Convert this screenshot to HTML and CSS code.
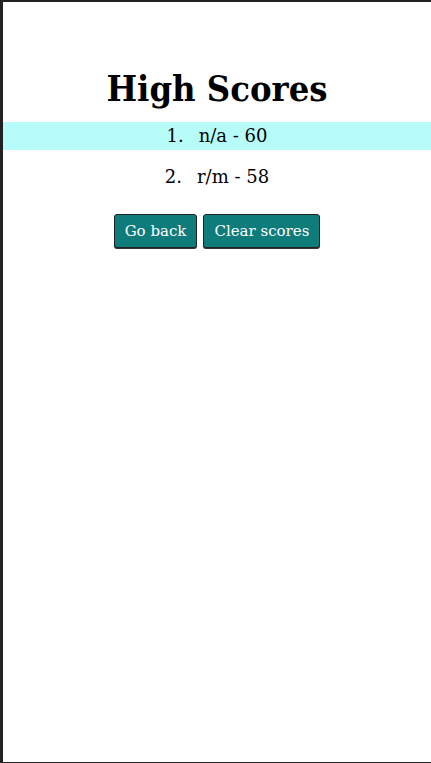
FILE: index.html
```html
<!DOCTYPE html>
<html>
<head>
<meta charset="utf-8">
<link rel="stylesheet" href="styles.css">
</head>
<body>
<div class="frame">
  <main class="scores">
    <h1 class="title">High Scores</h1>
    <ol class="list">
      <li class="item item-hl">n/a - 60</li>
      <li class="item">r/m - 58</li>
    </ol>
    <div class="actions">
      <button class="btn">Go back</button>
      <button class="btn">Clear scores</button>
    </div>
  </main>
</div>
</body>
</html>
```

FILE: styles.css
```css
html, body {
  margin: 0;
  padding: 0;
  background: #fff;
}
.frame {
  box-sizing: border-box;
  height: 763px;
  border-top: 2px solid #222;
  border-left: 3px solid #222;
  border-bottom: 1px solid #222;
  font-family: "DejaVu Serif", serif;
  color: #000;
}
.scores {
  padding-top: 57px;
  text-align: center;
}
.title {
  margin: 0;
  font-family: "DejaVu Serif Condensed", "DejaVu Serif", serif;
  font-size: 36px;
  font-weight: bold;
  line-height: 58px;
}
.list {
  list-style: none;
  margin: 5px 0 0;
  padding: 0;
  counter-reset: rank;
}
.item {
  counter-increment: rank;
  font-size: 18px;
  line-height: 28px;
  padding: 0;
  margin-bottom: 13px;
}
.item::before {
  content: counter(rank) ".";
  display: inline-block;
  margin-right: 15px;
}
.item-hl {
  background: #b6fcf9;
}
.actions {
  display: flex;
  justify-content: center;
  gap: 6px;
  margin-top: 23px;
}
.btn {
  font-family: "DejaVu Serif", serif;
  font-size: 15px;
  color: #fff;
  background: #0e7c7b;
  border: 1px solid #222;
  border-radius: 3px;
  box-shadow: 0 1px 0 #333;
  height: 34px;
  padding: 0 10px;
}
```
